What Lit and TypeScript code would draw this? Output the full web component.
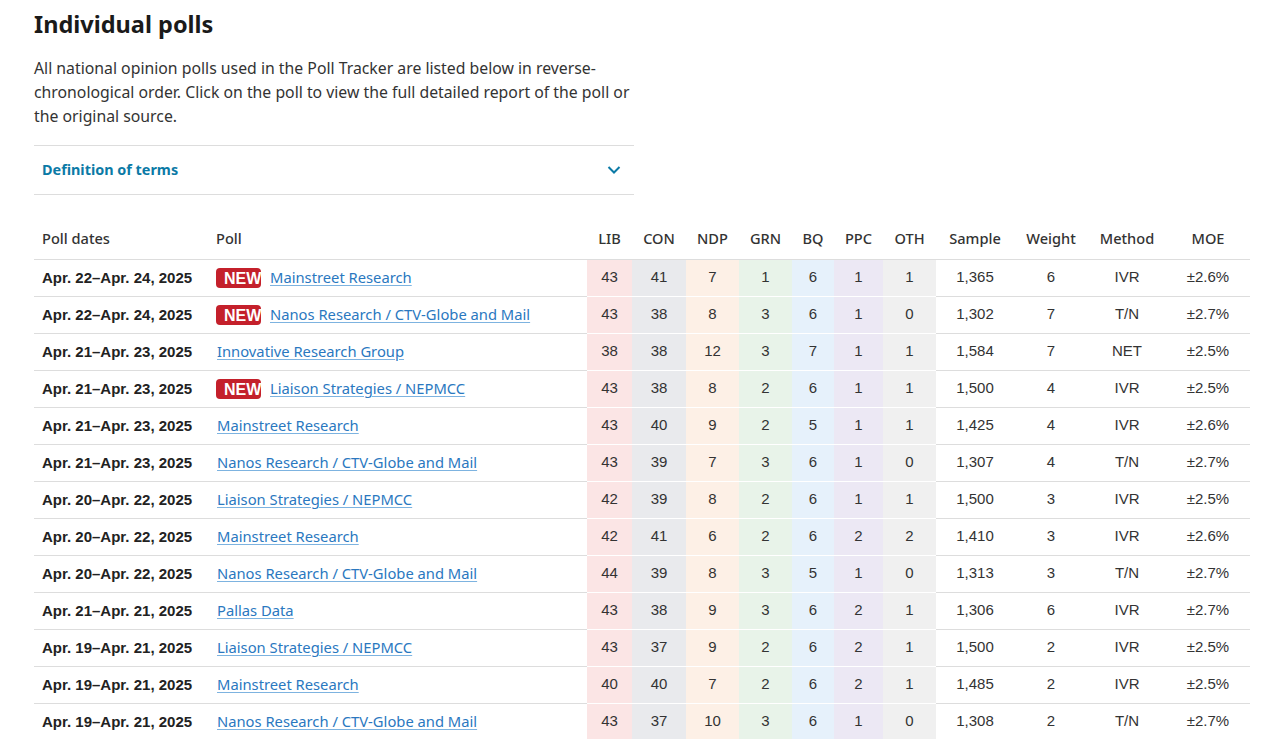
import { LitElement, html, css } from "lit";
import { customElement } from "lit/decorators.js";

type Row = [string, string, boolean, number, number, number, number, number, number, number, string, number, string, string];
const rows: Row[] = [
  ["Apr. 22–Apr. 24, 2025", "Mainstreet Research", true, 43, 41, 7, 1, 6, 1, 1, "1,365", 6, "IVR", "±2.6%"],
  ["Apr. 22–Apr. 24, 2025", "Nanos Research / CTV-Globe and Mail", true, 43, 38, 8, 3, 6, 1, 0, "1,302", 7, "T/N", "±2.7%"],
  ["Apr. 21–Apr. 23, 2025", "Innovative Research Group", false, 38, 38, 12, 3, 7, 1, 1, "1,584", 7, "NET", "±2.5%"],
  ["Apr. 21–Apr. 23, 2025", "Liaison Strategies / NEPMCC", true, 43, 38, 8, 2, 6, 1, 1, "1,500", 4, "IVR", "±2.5%"],
  ["Apr. 21–Apr. 23, 2025", "Mainstreet Research", false, 43, 40, 9, 2, 5, 1, 1, "1,425", 4, "IVR", "±2.6%"],
  ["Apr. 21–Apr. 23, 2025", "Nanos Research / CTV-Globe and Mail", false, 43, 39, 7, 3, 6, 1, 0, "1,307", 4, "T/N", "±2.7%"],
  ["Apr. 20–Apr. 22, 2025", "Liaison Strategies / NEPMCC", false, 42, 39, 8, 2, 6, 1, 1, "1,500", 3, "IVR", "±2.5%"],
  ["Apr. 20–Apr. 22, 2025", "Mainstreet Research", false, 42, 41, 6, 2, 6, 2, 2, "1,410", 3, "IVR", "±2.6%"],
  ["Apr. 20–Apr. 22, 2025", "Nanos Research / CTV-Globe and Mail", false, 44, 39, 8, 3, 5, 1, 0, "1,313", 3, "T/N", "±2.7%"],
  ["Apr. 21–Apr. 21, 2025", "Pallas Data", false, 43, 38, 9, 3, 6, 2, 1, "1,306", 6, "IVR", "±2.7%"],
  ["Apr. 19–Apr. 21, 2025", "Liaison Strategies / NEPMCC", false, 43, 37, 9, 2, 6, 2, 1, "1,500", 2, "IVR", "±2.5%"],
  ["Apr. 19–Apr. 21, 2025", "Mainstreet Research", false, 40, 40, 7, 2, 6, 2, 1, "1,485", 2, "IVR", "±2.5%"],
  ["Apr. 19–Apr. 21, 2025", "Nanos Research / CTV-Globe and Mail", false, 43, 37, 10, 3, 6, 1, 0, "1,308", 2, "T/N", "±2.7%"],
];
const parties = ["lib", "con", "ndp", "grn", "bq", "ppc", "oth"];
const widths = [174, 379, 45, 54, 53, 53, 42, 49, 53, 78, 74, 78, 84];
const heads = ["Poll dates", "Poll", "LIB", "CON", "NDP", "GRN", "BQ", "PPC", "OTH", "Sample", "Weight", "Method", "MOE"];

@customElement("app-root")
export class AppRoot extends LitElement {
  static styles = css`
    :host { display: block; height: 739px; overflow: hidden; background: #fff; font-family: "Noto Sans", sans-serif; color: #222; }
    .page { padding: 9px 12px 0 34px; display: flex; flex-direction: column; }
    h2 { margin: 0; font-size: 23.5px; line-height: 30px; font-weight: 700; color: #1a1a1a; }
    .intro { margin: 17px 0 0; width: 600px; font-size: 15.8px; line-height: 24px; color: #333; }
    .terms { width: 600px; box-sizing: border-box; height: 50px; margin-top: 17px; padding: 0 13px 2px 8px; display: flex; align-items: center; justify-content: space-between; border-top: 1px solid #ddd; border-bottom: 1px solid #ddd; color: #0b7aa6; font-size: 14.4px; font-weight: 700; }
    .terms svg { display: block; margin-top: 2px; }
    table { margin-top: 25px; width: 1216px; table-layout: fixed; border-collapse: separate; border-spacing: 0; }
    th { height: 40px; padding: 0 0 3px; box-sizing: border-box; font-size: 14.6px; font-weight: 500; text-align: center; color: #333; border-bottom: 1px solid #ddd; }
    th.left { text-align: left; padding-left: 8px; }
    td { height: 37px; padding: 0 0 4px; box-sizing: border-box; border-bottom: 1px solid #ddd; text-align: center; font-family: "Liberation Sans", sans-serif; font-size: 15px; color: #333; }
    td.date { text-align: left; padding: 0 0 2px 8px; font-weight: 700; color: #222; white-space: nowrap; }
    td.poll { text-align: left; padding: 0 0 1px 8px; white-space: nowrap; }
    td.party { border-bottom-color: #fff; }
    .lib { background: #fbe5e5; }
    .con { background: #e9eaed; }
    .ndp { background: #fdf0e6; }
    .grn { background: #e8f3e9; }
    .bq { background: #e6f1fb; }
    .ppc { background: #ece8f4; }
    .oth { background: #f0f0f0; }
    .pollwrap { display: flex; align-items: center; gap: 8px; }
    .new { display: block; margin-top: 1px; background: #c4202b; color: #fff; font-family: "Liberation Sans", sans-serif; font-weight: 700; font-size: 16px; line-height: 21px; padding: 0 0 0 8px; border-radius: 4px; width: 37px; height: 20px; overflow: hidden; white-space: nowrap; }
    a { font-family: "Noto Sans", sans-serif; font-size: 14.75px; color: #2a78bf; text-decoration-line: underline; text-decoration-color: #7db3e0; text-underline-offset: 2px; margin-left: 1px; padding-bottom: 1px; }
  `;
  render() {
    return html`<div class="page">
      <h2>Individual polls</h2>
      <p class="intro">All national opinion polls used in the Poll Tracker are listed below in reverse-chronological order. Click on the poll to view the full detailed report of the poll or the original source.</p>
      <div class="terms"><span>Definition of terms</span>
        <svg width="14" height="10" viewBox="0 0 14 10" fill="none" stroke="#0b7aa6" stroke-width="2"><path d="M1.5 2 L7 7.5 L12.5 2"/></svg>
      </div>
      <table>
        <colgroup>${widths.map((w) => html`<col style="width:${w}px" />`)}</colgroup>
        <thead><tr>${heads.map((h, i) => html`<th class="${i < 2 ? "left" : ""}">${h}</th>`)}</tr></thead>
        <tbody>
          ${rows.map((r) => html`<tr>
            <td class="date">${r[0]}</td>
            <td class="poll"><div class="pollwrap">${r[2] ? html`<span class="new">NEW</span>` : ""}<a href="#">${r[1]}</a></div></td>
            ${parties.map((p, i) => html`<td class="party ${p}">${r[3 + i]}</td>`)}
            <td>${r[10]}</td><td>${r[11]}</td><td>${r[12]}</td><td>${r[13]}</td>
          </tr>`)}
        </tbody>
      </table>
    </div>`;
  }
}
